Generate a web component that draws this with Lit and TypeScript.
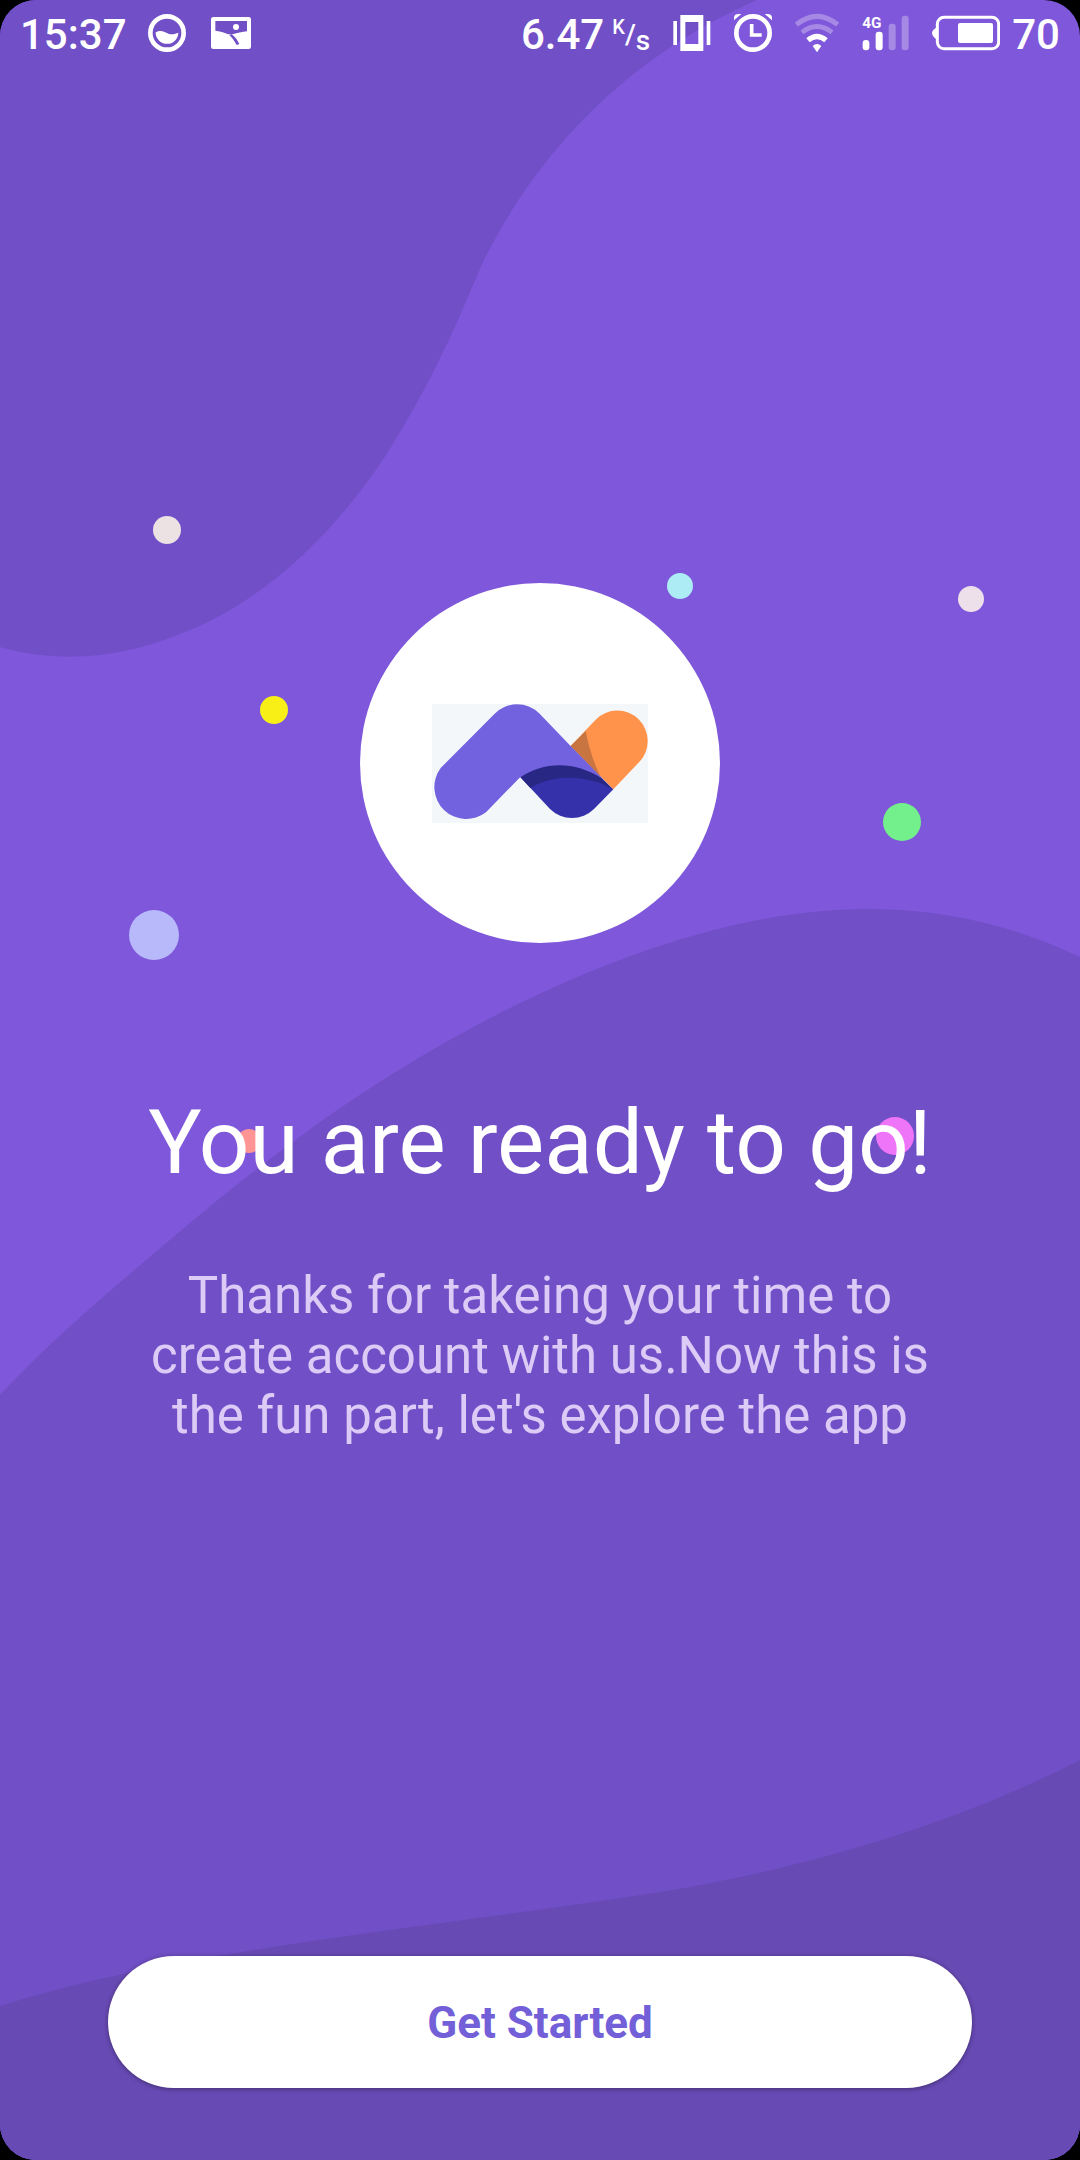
import { LitElement, html, css, svg } from "lit";
import { customElement } from "lit/decorators.js";

interface Dot {
  x: number;
  y: number;
  r: number;
  fill: string;
}

const DOTS: Dot[] = [
  { x: 167, y: 530, r: 14, fill: "#ece1e3" },
  { x: 680, y: 586, r: 13, fill: "#adebf5" },
  { x: 971, y: 599, r: 13, fill: "#eee0ea" },
  { x: 274, y: 710, r: 14, fill: "#f8ef17" },
  { x: 902, y: 822, r: 19, fill: "#73f08c" },
  { x: 154, y: 935, r: 25, fill: "#b8b9fb" },
  { x: 249, y: 1141, r: 12, fill: "#ff9494" },
  { x: 895, y: 1136, r: 19, fill: "#ee74f8" },
];

/** Wavy purple backdrop with confetti dots. */
@customElement("confetti-backdrop")
export class ConfettiBackdrop extends LitElement {
  static styles = css`
    :host {
      display: block;
    }
    .canvas {
      display: block;
      width: 100%;
      height: 100%;
    }
  `;

  render() {
    return html`
      <svg class="canvas" viewBox="0 0 1080 2160" preserveAspectRatio="xMidYMid slice" aria-hidden="true">
        <rect width="1080" height="2160" fill="#7e57da" />
        <path
          fill="#714fc6"
          d="M0 0H757C620 60 534 160 484 260C466 300 440 370 386 455C340 525 270 600 180 634C120 658 60 664 0 647Z"
        />
        <path
          fill="#714fc6"
          d="M0 1395C40 1352 85 1312 131 1273C170 1240 208 1207 248 1176C290 1143 338 1108 386 1078C500 1006 690 909 868 909C945 909 1015 926 1080 957V2160H0Z"
        />
        <path
          fill="#684ab5"
          d="M0 2006C82 1980 164 1965 248 1951C380 1929 520 1914 654 1893C810 1868 960 1822 1080 1760V2160H0Z"
        />
        ${DOTS.map((d) => svg`<circle cx=${d.x} cy=${d.y} r=${d.r} fill=${d.fill} />`)}
      </svg>
    `;
  }
}

/** Phone status bar: clock and notifications left, system state right. */
@customElement("status-bar")
export class StatusBar extends LitElement {
  static styles = css`
    :host {
      display: flex;
      justify-content: space-between;
      align-items: center;
      height: 66px;
      padding: 0 20px;
      color: #fff;
      font-size: 42px;
      font-weight: 500;
      line-height: 48px;
    }
    .group {
      display: flex;
      align-items: center;
      gap: 23px;
    }
    .notices {
      gap: 21px;
    }
    .pair {
      display: flex;
      align-items: center;
      gap: 12px;
    }
    .text {
      padding-top: 4px;
    }
    .rate {
      display: flex;
      align-items: flex-start;
      gap: 8px;
      height: 48px;
    }
    .unit {
      display: flex;
      font-size: 28px;
    }
    .kilo {
      font-size: 20px;
      line-height: 32px;
    }
    .second {
      padding-top: 6px;
    }
    svg {
      display: block;
      flex: none;
      fill: #fff;
    }
    .line {
      fill: none;
      stroke: #fff;
    }
    .faint {
      opacity: 0.3;
    }
  `;

  render() {
    return html`
      <div class="group notices">
        <span class="text">15:37</span>
        <svg width="38" height="40" viewBox="447 39 114 120" aria-hidden="true">
          <circle class="line" cx="504" cy="99" r="50" stroke-width="14" />
          <path d="M470 97C486 88 497 96 508 101C520 106 530 100 538 98A34 34 0 0 1 470 97Z" />
        </svg>
        <svg width="48" height="40" viewBox="621 39 144 120" aria-hidden="true">
          <path
            fill-rule="evenodd"
            d="M640 51H746Q753 51 753 58V140Q753 147 746 147H640Q633 147 633 140V58Q633 51 640 51ZM646 63V92C665 95 678 98 690 106C702 101 720 97 741 94V63ZM684 102C696 112 704 124 710 135L718 132C713 121 707 113 698 105Z"
          />
          <circle cx="708" cy="81" r="9" />
        </svg>
      </div>
      <div class="group">
        <div class="rate text">
          <span>6.47</span>
          <span class="unit"><span class="kilo">K</span><span>/</span><span class="second">s</span></span>
        </div>
        <svg width="38" height="40" viewBox="521 39 114 120" aria-hidden="true">
          <path
            fill-rule="evenodd"
            d="M543 45H612V153H543ZM558 66V132H597V66ZM522 63H533V135H522ZM622 63H633V135H622Z"
          />
        </svg>
        <svg width="38" height="40" viewBox="705 39 114 120" aria-hidden="true">
          <circle class="line" cx="762" cy="99" r="50" stroke-width="14" />
          <path class="line" stroke-width="11" d="M758 72V105H788" />
          <path d="M705 61V52Q707 42 718 42H727ZM819 61V52Q817 42 806 42H797Z" />
        </svg>
        <svg width="44" height="40" viewBox="51 39 132 120" aria-hidden="true">
          <path class="line faint" stroke-width="15" d="M55 74Q117 24 179 74" />
          <path class="line faint" stroke-width="14" d="M72 97Q117 62 162 97" />
          <path class="line" stroke-width="16" d="M90 121Q117 98 144 121" />
          <path d="M104 138Q117 126 130 138L117 157Z" />
        </svg>
        <svg width="47" height="40" viewBox="253 39 141 120" aria-hidden="true">
          <text x="254" y="84" font-size="46" font-weight="700">4G</text>
          <rect x="255" y="120" width="20" height="31" rx="9" />
          <rect x="294" y="95" width="21" height="56" rx="9" />
          <rect class="faint" x="333" y="71" width="21" height="80" rx="9" />
          <rect class="faint" x="372" y="47" width="21" height="104" rx="9" />
        </svg>
        <div class="pair">
          <svg width="68" height="40" viewBox="456 39 204 120" aria-hidden="true">
            <rect class="line" x="472" y="52" width="184" height="94" rx="20" stroke-width="9" />
            <path d="M469 83Q456 90 456 99T469 118Z" />
            <rect x="534" y="69" width="105" height="60" rx="6" />
          </svg>
          <span class="text">70</span>
        </div>
      </div>
    `;
  }
}

/** Brand mark on a white disc. */
@customElement("brand-badge")
export class BrandBadge extends LitElement {
  static styles = css`
    :host {
      display: grid;
      place-items: center;
      width: 360px;
      height: 360px;
      border-radius: 50%;
      background: #fff;
    }
    svg {
      display: block;
      width: 60%;
    }
  `;

  render() {
    return html`
      <svg viewBox="276 432 648 357" role="img" aria-label="Brand logo">
        <rect x="276" y="432" width="648" height="357" fill="#f4f7fa" />
        <path fill="#3431aa" d="M540 650L600 600H730L820 688L762 747A94 94 0 0 1 630 747Z" />
        <path fill="#292784" d="M540 650L600 600H730L818 688C750 645 640 640 571 684Z" />
        <path fill="#ff934b" d="M692 558L767 479A91 91 0 0 1 897 607L820 688Z" />
        <path fill="#c97541" d="M692 558L737 513C746 560 760 605 782 652Z" />
        <path
          fill="#7262e0"
          d="M302 624L464 461A95 95 0 0 1 599 461L694 560L788 656C700 600 610 605 538 654L438 757A96 96 0 0 1 302 624Z"
        />
      </svg>
    `;
  }
}

@customElement("app-root")
export class AppRoot extends LitElement {
  static styles = css`
    :host {
      display: block;
      background: #000;
      font-family: Roboto, "Liberation Sans", sans-serif;
    }
    .screen {
      position: relative;
      display: flex;
      flex-direction: column;
      min-height: 100vh;
      border-radius: 36px;
      overflow: hidden;
      isolation: isolate;
    }
    .backdrop {
      position: absolute;
      inset: 0;
      z-index: -1;
    }
    .content {
      flex: 1;
      display: flex;
      flex-direction: column;
      align-items: center;
      padding: 517px 10% 72px;
    }
    .title {
      margin: 140px 0 0;
      color: #fff;
      font-size: 89px;
      font-weight: 400;
      line-height: 120px;
      text-align: center;
    }
    .message {
      max-width: 800px;
      margin: 63px 0;
      color: #dccbf6;
      font-size: 51px;
      line-height: 60px;
      text-align: center;
    }
    .start {
      width: 100%;
      height: 132px;
      margin-top: auto;
      padding: 2px 0 0;
      border: 0;
      border-radius: 66px;
      background: #fff;
      box-shadow: 0 1px 5px rgba(0, 0, 0, 0.4);
      color: #7360d8;
      font: inherit;
      font-size: 44px;
      font-weight: 700;
      cursor: pointer;
    }
  `;

  render() {
    return html`
      <div class="screen">
        <confetti-backdrop class="backdrop"></confetti-backdrop>
        <status-bar></status-bar>
        <main class="content">
          <brand-badge></brand-badge>
          <h1 class="title">You are ready to go!</h1>
          <p class="message">Thanks for takeing your time to create account with us.Now this is the fun part, let's explore the app</p>
          <button class="start" type="button">Get Started</button>
        </main>
      </div>
    `;
  }
}
